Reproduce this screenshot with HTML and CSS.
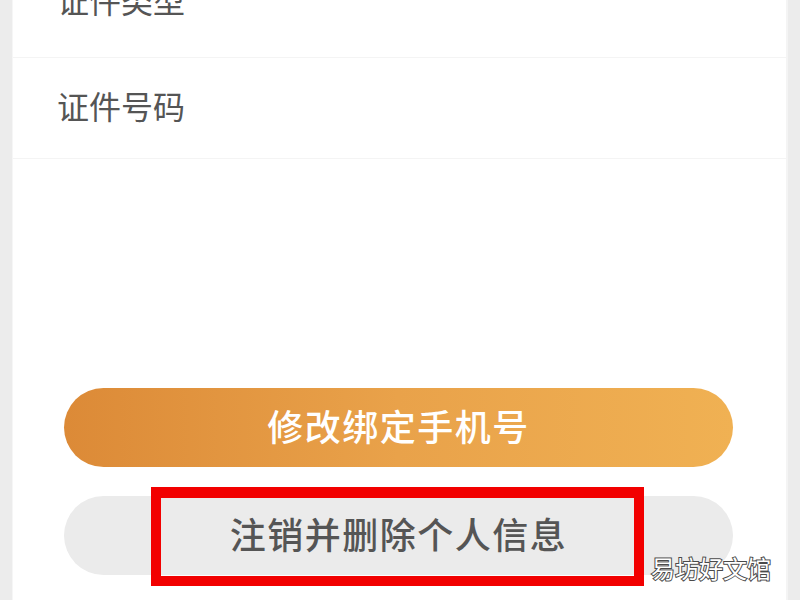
FILE: index.html
```html
<!DOCTYPE html>
<html lang="zh-CN">
<head>
<meta charset="utf-8">
<link rel="stylesheet" href="styles.css">
</head>
<body>
<div class="page">
  <div class="side side-left"></div>
  <main class="main">
    <div class="list">
      <div class="row">证件类型</div>
      <div class="row">证件号码</div>
    </div>
    <div class="actions">
      <button class="btn btn-primary">修改绑定手机号</button>
      <button class="btn btn-secondary">注销并删除个人信息</button>
    </div>
    <div class="highlight"></div>
    <div class="watermark">易坊好文馆</div>
  </main>
  <div class="side side-right"></div>
</div>
</body>
</html>
```

FILE: styles.css
```css
* { box-sizing: border-box; }
html, body {
  margin: 0;
  padding: 0;
  width: 800px;
  height: 600px;
  overflow: hidden;
  background: #ededed;
  font-family: "Noto Sans CJK SC", "Noto Sans", sans-serif;
}
.page {
  display: flex;
  width: 800px;
  height: 600px;
}
.side { background: #ececec; }
.side-left { width: 13px; border-right: 1px solid #f6f6f6; }
.side-right { width: 14px; border-left: 2px solid #f4f4f4; }
.main {
  position: relative;
  width: 773px;
  height: 600px;
  background: #ffffff;
  overflow: hidden;
}
.list {
  margin-top: -46px;
}
.row {
  height: 101px;
  padding-left: 44px;
  padding-bottom: 7px;
  display: flex;
  align-items: center;
  font-size: 32px;
  color: #555555;
  border-bottom: 1px solid #f4f4f4;
}
.row:first-child { height: 104px; padding-bottom: 14px; }
.actions {
  margin-top: 229px;
  padding-left: 51px;
  display: flex;
  flex-direction: column;
  gap: 29px;
}
.btn {
  width: 669px;
  height: 79px;
  border: none;
  border-radius: 40px;
  font-family: "Noto Sans CJK SC", "Noto Sans", sans-serif;
  font-size: 36px;
  font-weight: 500;
  letter-spacing: 1.5px;
  padding: 0 0 5px 0;
}
.btn-primary {
  background: linear-gradient(90deg, #dc8a37 0%, #e9a24a 50%, #f0b153 100%);
  color: #ffffff;
}
.btn-secondary {
  background: #ebebeb;
  color: #555555;
}
.highlight {
  position: absolute;
  left: 138px;
  top: 487px;
  width: 493px;
  height: 99px;
  border: 10px solid #f20000;
  border-top-width: 11px;
}
.watermark {
  position: absolute;
  left: 638px;
  top: 550px;
  font-size: 24px;
  color: #ffffff;
  -webkit-text-stroke: 2px #4a4a4a;
  paint-order: stroke fill;
}
```
